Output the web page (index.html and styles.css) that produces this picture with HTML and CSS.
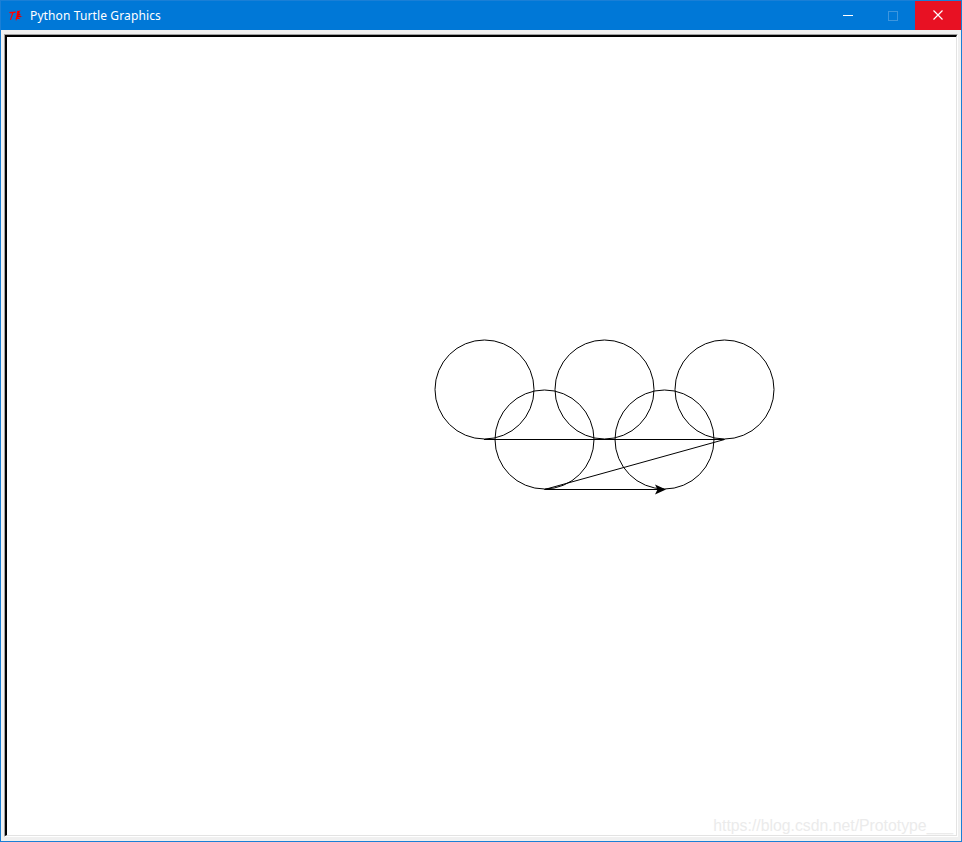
FILE: index.html
```html
<!DOCTYPE html>
<html>
<head>
<meta charset="utf-8">
<title>Python Turtle Graphics</title>
<link rel="stylesheet" href="styles.css">
</head>
<body>
<div class="window">
  <div class="titlebar">
    <svg class="app-icon" width="16" height="16" viewBox="0 0 16 16">
      <path d="M1 4 L8 3.5 L7.2 5 L5.5 5 L3 12 L1.8 12 L4 5.2 L2.2 5.6 Z" fill="#ff0000"/>
      <path d="M9 3 L12.5 2.5 L11 5 L13 6.5 L10.5 7 L14.5 8.5 L10 9 L12.5 11 L9 11 L8 13 L7.5 11 L8.5 7.5 Z" fill="#ff0000"/>
      <path d="M10 4 L11.5 4.5 M9.5 6 L12 6.5 M9 8 L13 8.8" stroke="#b00000" stroke-width="0.6"/>
    </svg>
    <span class="title">Python Turtle Graphics</span>
    <div class="controls">
      <div class="ctl min"><span class="min-line"></span></div>
      <div class="ctl max"><span class="max-box"></span></div>
      <div class="ctl close">
        <svg width="10" height="10" viewBox="0 0 10 10"><path d="M0.5 0.5 L9.5 9.5 M9.5 0.5 L0.5 9.5" stroke="#fff" stroke-width="1.2"/></svg>
      </div>
    </div>
  </div>
  <div class="client">
    <div class="canvas-outer">
      <div class="canvas">
        <svg class="drawing" width="949" height="798" viewBox="7 37 949 798">
          <g fill="none" stroke="#000" stroke-width="1">
            <circle cx="484.5" cy="389.5" r="49.5"/>
            <circle cx="604.5" cy="389.5" r="49.5"/>
            <circle cx="724.5" cy="389.5" r="49.5"/>
            <circle cx="544.5" cy="439.5" r="49.5"/>
            <circle cx="664.5" cy="439.5" r="49.5"/>
            <path d="M484 439.5 L724.5 439.5 L544.5 489.5 L664 489.5"/>
          </g>
          <polygon points="666,489.5 655,484.5 657.5,489.5 655,494.5" fill="#000"/>
        </svg>
        <div class="watermark">https://blog.csdn.net/Prototype___</div>
      </div>
    </div>
  </div>
</div>
</body>
</html>
```
FILE: styles.css
```css
html, body {
  margin: 0;
  padding: 0;
  background: #ffffff;
}
.window {
  width: 962px;
  height: 842px;
  box-sizing: border-box;
  border: 1px solid #1a7fd6;
  display: flex;
  flex-direction: column;
  overflow: hidden;
}
.titlebar {
  height: 29px;
  background: #0078d7;
  display: flex;
  align-items: center;
  flex-shrink: 0;
}
.app-icon {
  margin-left: 7px;
  margin-right: 6px;
  flex-shrink: 0;
}
.title {
  color: #ffffff;
  font-family: "Noto Sans", "Open Sans", sans-serif;
  font-size: 12px;
  letter-spacing: 0.12px;
  line-height: 29px;
}
.controls {
  margin-left: auto;
  display: flex;
  height: 29px;
}
.ctl {
  width: 45px;
  height: 29px;
  display: flex;
  align-items: center;
  justify-content: center;
}
.min-line {
  display: block;
  width: 10px;
  height: 1px;
  background: #ffffff;
}
.max-box {
  display: block;
  width: 8px;
  height: 8px;
  border: 1px solid #3d96de;
}
.close {
  background: #e81123;
  width: 46px;
  margin-top: -1px;
  height: 30px;
}
.client {
  flex: 1;
  background: #f0f0f0;
  padding: 4px 2px 0 3px;
}
.canvas-outer {
  width: 954px;
  height: 803px;
  box-sizing: border-box;
  border-style: solid;
  border-width: 1px;
  border-color: #a0a0a0 #ffffff #ffffff #a0a0a0;
}
.canvas {
  position: relative;
  width: 100%;
  height: 100%;
  box-sizing: border-box;
  border-style: solid;
  border-width: 2px 1px 1px 2px;
  border-color: #000000 #e3e3e3 #e3e3e3 #000000;
  background: #ffffff;
  overflow: hidden;
}
.drawing {
  display: block;
}
.watermark {
  position: absolute;
  right: 3px;
  bottom: 0;
  font-family: "Liberation Sans", Arial, sans-serif;
  font-size: 15.8px;
  color: #ebebeb;
  white-space: nowrap;
}
```
